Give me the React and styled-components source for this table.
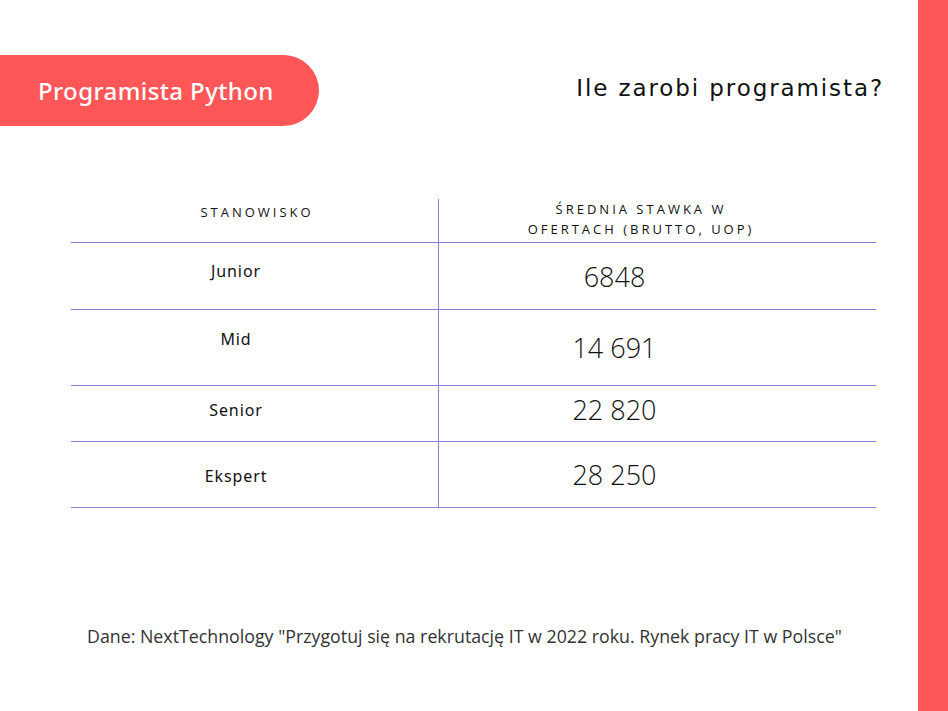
import React from "react";
import styled, { createGlobalStyle } from "styled-components";

const Global = createGlobalStyle`
  html, body { margin: 0; padding: 0; background: #ffffff; }
  body { font-family: "Noto Sans", "Open Sans", sans-serif; }
  * { box-sizing: border-box; }
`;

const Page = styled.div`
  width: 948px;
  height: 711px;
  display: flex;
  overflow: hidden;
  background: #ffffff;
`;

const Main = styled.div`
  flex: 1;
  display: flex;
  flex-direction: column;
`;

const Strip = styled.div`
  width: 30px;
  background: #ff5757;
`;

const TopBar = styled.header`
  display: flex;
  align-items: flex-start;
  justify-content: space-between;
  padding-top: 55px;
  padding-right: 34px;
`;

const Pill = styled.div`
  width: 319px;
  height: 71px;
  background: #ff5757;
  border-radius: 0 36px 36px 0;
  display: flex;
  align-items: center;
  padding-left: 38px;
  padding-bottom: 1px;
  color: #ffffff;
  font-family: "Noto Sans", sans-serif;
  font-weight: 500;
  font-size: 24px;
  letter-spacing: 0.4px;
`;

const Title = styled.h1`
  margin: 19px 0 0 0;
  font-family: "DejaVu Sans", sans-serif;
  font-weight: 400;
  font-size: 23px;
  line-height: 28px;
  letter-spacing: 1.9px;
  color: #111111;
`;

const Table = styled.div`
  margin: 73px 0 0 71px;
  width: 805px;
  display: flex;
  flex-direction: column;
`;

const Row = styled.div`
  display: grid;
  grid-template-columns: 368px 1fr;
  height: ${(p) => p.$h}px;
  border-bottom: 1px solid #8a83d8;
`;

const LeftCell = styled.div`
  border-right: 1px solid #8a83d8;
  text-align: center;
  padding-top: ${(p) => p.$pt}px;
  padding-left: ${(p) => p.$pl || 0}px;
  padding-right: ${(p) => p.$pr || 0}px;
`;

const RightCell = styled.div`
  text-align: center;
  padding-top: ${(p) => p.$pt}px;
  padding-right: ${(p) => p.$pr}px;
`;

const HeadText = styled.div`
  font-family: "Open Sans", sans-serif;
  font-size: 13px;
  line-height: 20px;
  letter-spacing: 3px;
  color: #111111;
`;

const Label = styled.div`
  font-family: "Noto Sans", sans-serif;
  font-size: 16px;
  line-height: 20px;
  letter-spacing: 0.9px;
  color: #111111;
`;

const Value = styled.div`
  font-family: "Open Sans", sans-serif;
  font-weight: 300;
  font-size: 27px;
  line-height: 34px;
  color: #111111;
`;

const Note = styled.p`
  margin: 116px 0 0 87px;
  font-family: "Open Sans", sans-serif;
  font-size: 17.8px;
  line-height: 24px;
  color: #333333;
  white-space: nowrap;
`;

const rows = [
  { label: "Junior", value: "6848", h: 67, lp: 18, vp: 17 },
  { label: "Mid", value: "14 691", h: 76, lp: 19, vp: 21 },
  { label: "Senior", value: "22 820", h: 56, lp: 14, vp: 7 },
  { label: "Ekspert", value: "28 250", h: 66, lp: 24, vp: 16 },
];

export default function App() {
  return (
    <>
      <Global />
      <Page>
        <Main>
          <TopBar>
            <Pill>Programista Python</Pill>
            <Title>Ile zarobi programista?</Title>
          </TopBar>
          <Table>
            <Row $h={44}>
              <LeftCell $pt={3} $pl={5}>
                <HeadText>STANOWISKO</HeadText>
              </LeftCell>
              <RightCell $pt={-3} $pr={33}>
                <HeadText>
                  ŚREDNIA STAWKA W<br />
                  OFERTACH (BRUTTO, UOP)
                </HeadText>
              </RightCell>
            </Row>
            {rows.map((r) => (
              <Row key={r.label} $h={r.h}>
                <LeftCell $pt={r.lp} $pr={37}>
                  <Label>{r.label}</Label>
                </LeftCell>
                <RightCell $pt={r.vp} $pr={86}>
                  <Value>{r.value}</Value>
                </RightCell>
              </Row>
            ))}
          </Table>
          <Note>
            Dane: NextTechnology "Przygotuj się na rekrutację IT w 2022 roku. Rynek pracy IT w Polsce"
          </Note>
        </Main>
        <Strip />
      </Page>
    </>
  );
}
